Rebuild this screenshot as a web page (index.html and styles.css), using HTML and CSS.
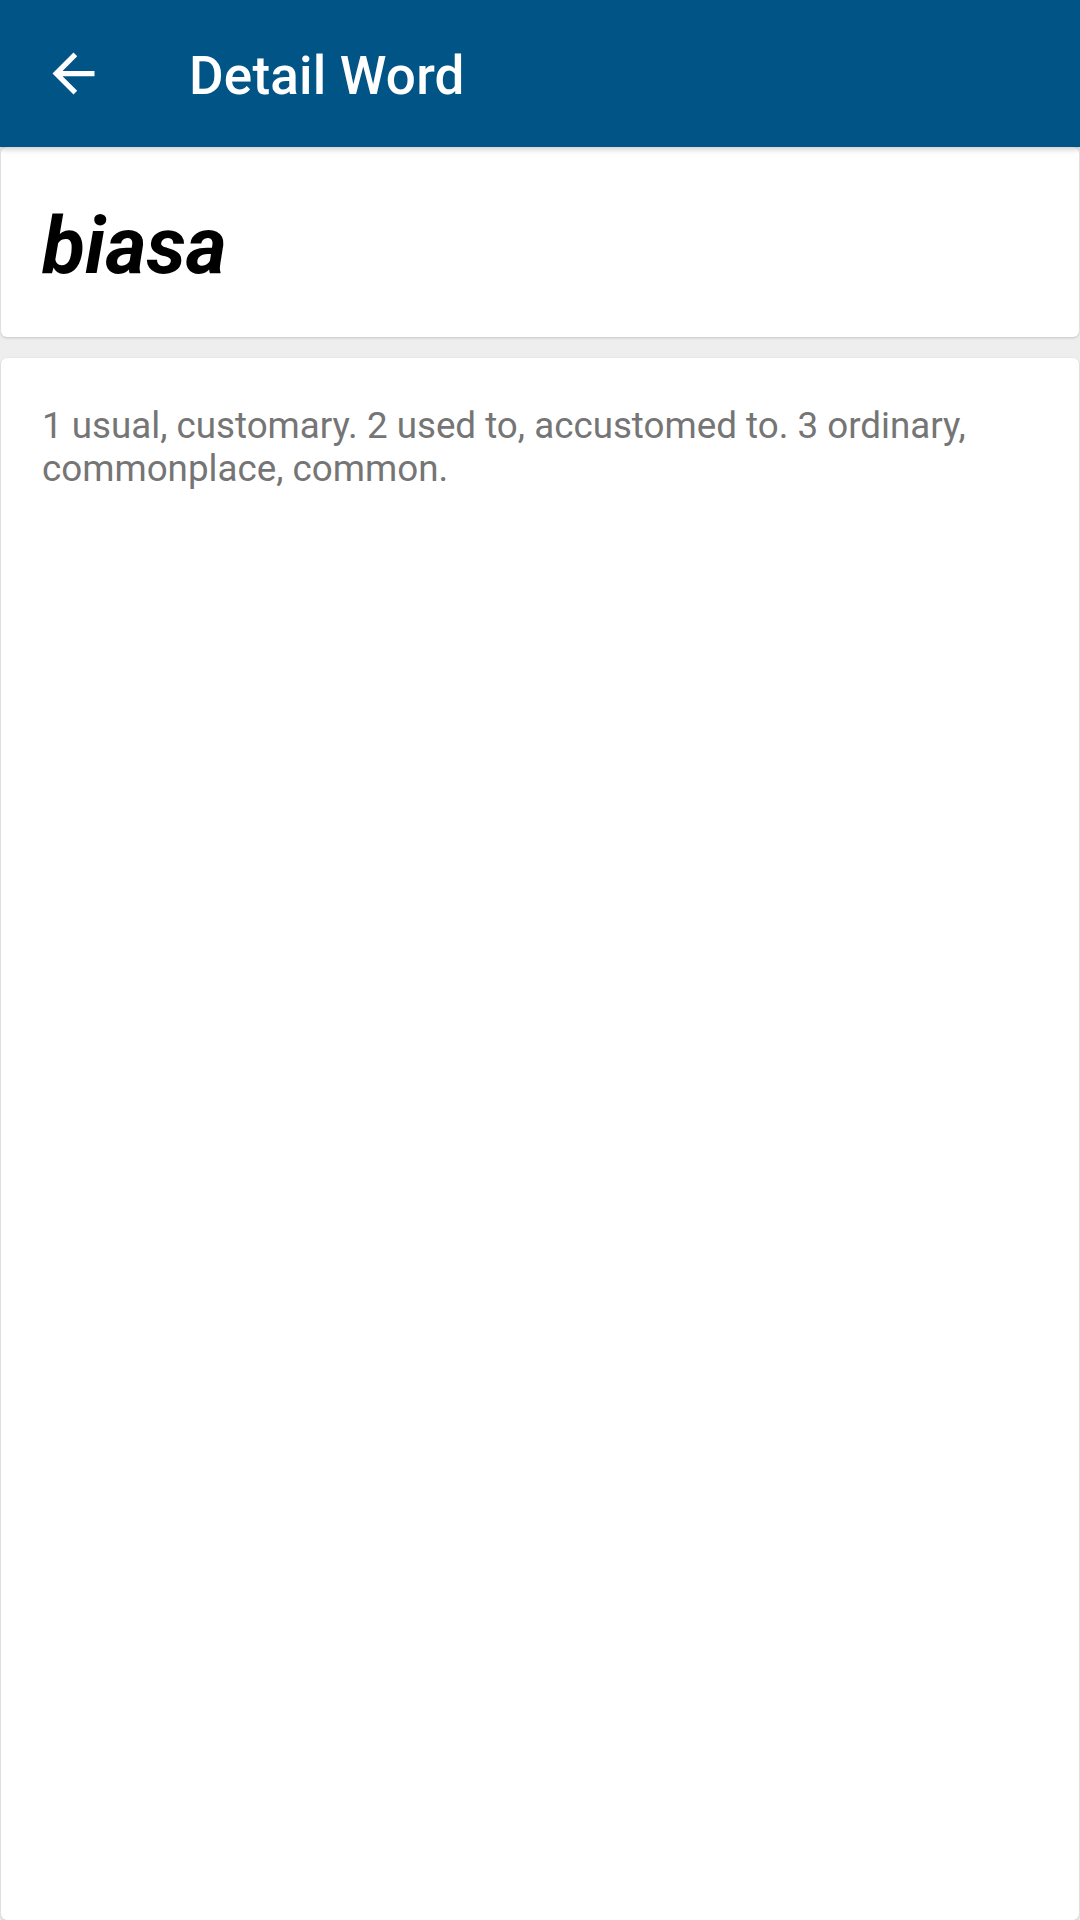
FILE: index.html
```html
<!DOCTYPE html>
<html>
<head>
<meta charset="utf-8">
<link rel="stylesheet" href="styles.css">
</head>
<body>
<div class="screen">
  <header class="appbar">
    <svg class="back" viewBox="0 0 24 24" width="63" height="63"><path fill="#fff" d="M20 11H7.83l5.59-5.59L12 4l-8 8 8 8 1.41-1.41L7.83 13H20v-2z"/></svg>
    <h1 class="title">Detail Word</h1>
  </header>
  <main class="content">
    <section class="card word-card">
      <h2 class="word">biasa</h2>
    </section>
    <section class="card def-card">
      <p class="definition">1 usual, customary. 2 used to, accustomed to. 3 ordinary, commonplace, common.</p>
    </section>
  </main>
</div>
</body>
</html>
```

FILE: styles.css
```css
html, body {
  margin: 0;
  padding: 0;
  height: 100%;
}
body {
  font-family: Roboto, "Noto Sans", sans-serif;
  background: #eeeeee;
}
.screen {
  display: flex;
  flex-direction: column;
  height: 1920px;
  overflow: hidden;
}
.appbar {
  position: relative;
  z-index: 2;
  height: 147px;
  flex: 0 0 147px;
  background: #015486;
  display: flex;
  align-items: center;
  box-shadow: 0 2px 6px rgba(0,0,0,0.22);
}
.back {
  margin-left: 42px;
  flex: 0 0 auto;
}
.title {
  margin: 4px 0 0 84px;
  color: #ffffff;
  font-size: 53px;
  font-weight: 500;
  letter-spacing: 0.2px;
}
.content {
  flex: 1;
  display: flex;
  flex-direction: column;
  gap: 21px;
}
.card {
  background: #ffffff;
  margin: 0 1px;
  border-radius: 6px;
  box-shadow: 0 1px 3px rgba(0,0,0,0.18);
}
.word-card {
  padding: 52px 41px 44px;
}
.word {
  margin: 0;
  font-size: 79px;
  line-height: 94px;
  font-weight: 700;
  font-style: italic;
  color: #000000;
}
.def-card {
  flex: 1;
  padding: 46px 41px 0;
}
.definition {
  margin: 0;
  font-size: 36.75px;
  line-height: 43px;
  color: #757575;
}
```
